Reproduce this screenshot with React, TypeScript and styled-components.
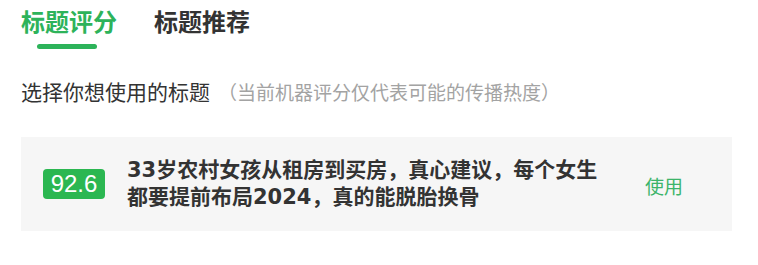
import React, { useState } from "react";
import styled, { createGlobalStyle } from "styled-components";

const GlobalStyle = createGlobalStyle`
  body {
    margin: 0;
    background: #ffffff;
    font-family: "Noto Sans CJK SC", "Noto Sans", sans-serif;
  }
`;

const tabs = ["标题评分", "标题推荐"];

const items = [
  {
    id: "1",
    score: "92.6",
    title: "33岁农村女孩从租房到买房，真心建议，每个女生都要提前布局2024，真的能脱胎换骨",
  },
];

const App: React.FC = () => {
  const [active, setActive] = useState(0);

  return (
    <Page>
      <GlobalStyle />
      <Tabs>
        {tabs.map((tab, i) => (
          <Tab key={tab} active={i === active} onClick={() => setActive(i)}>
            <TabLabel>{tab}</TabLabel>
            <Indicator active={i === active} />
          </Tab>
        ))}
      </Tabs>

      <Hint>
        选择你想使用的标题
        <HintNote>（当前机器评分仅代表可能的传播热度）</HintNote>
      </Hint>

      <List>
        {items.map((item) => (
          <Card key={item.id}>
            <Score>{item.score}</Score>
            <Title>{item.title}</Title>
            <UseButton>使用</UseButton>
          </Card>
        ))}
      </List>
    </Page>
  );
};

const green = "#2db35a";

const Page = styled.div`
  padding: 4px 26px 0 21px;
  display: flex;
  flex-direction: column;
`;

const Tabs = styled.div`
  display: flex;
  gap: 37px;
`;

const Tab = styled.div<{ active: boolean }>`
  display: flex;
  flex-direction: column;
  align-items: center;
  cursor: pointer;
  color: ${({ active }) => (active ? green : "#333333")};
`;

const TabLabel = styled.div`
  font-size: 24px;
  line-height: 34px;
  font-weight: 700;
`;

const Indicator = styled.div<{ active: boolean }>`
  width: 60px;
  height: 5px;
  margin-top: 6px;
  margin-right: 4px;
  border-radius: 3px;
  background: ${({ active }) => (active ? green : "transparent")};
`;

const Hint = styled.div`
  margin-top: 28px;
  font-size: 21px;
  line-height: 28px;
  color: #333333;
`;

const HintNote = styled.span`
  margin-left: 8px;
  font-size: 19px;
  color: #a3a3a3;
`;

const List = styled.div`
  margin-top: 31px;
  display: flex;
  flex-direction: column;
  gap: 12px;
`;

const Card = styled.div`
  height: 94px;
  box-sizing: border-box;
  display: flex;
  align-items: center;
  padding: 0 49px 0 22px;
  background: #f6f6f6;
`;

const Score = styled.div`
  flex: none;
  width: 62px;
  height: 30px;
  border-radius: 4px;
  background: #2bb751;
  color: #ffffff;
  font-family: "Liberation Sans", Arial, sans-serif;
  font-size: 24px;
  line-height: 30px;
  text-align: center;
`;

const Title = styled.div`
  width: 480px;
  margin-left: 22px;
  font-family: "DejaVu Sans", "Noto Sans CJK SC", sans-serif;
  font-size: 21px;
  line-height: 27px;
  font-weight: 600;
  color: #333333;
`;

const UseButton = styled.div`
  margin-left: auto;
  margin-top: 4px;
  font-size: 19px;
  line-height: 24px;
  color: #3cb46a;
  cursor: pointer;
`;

export default App;
